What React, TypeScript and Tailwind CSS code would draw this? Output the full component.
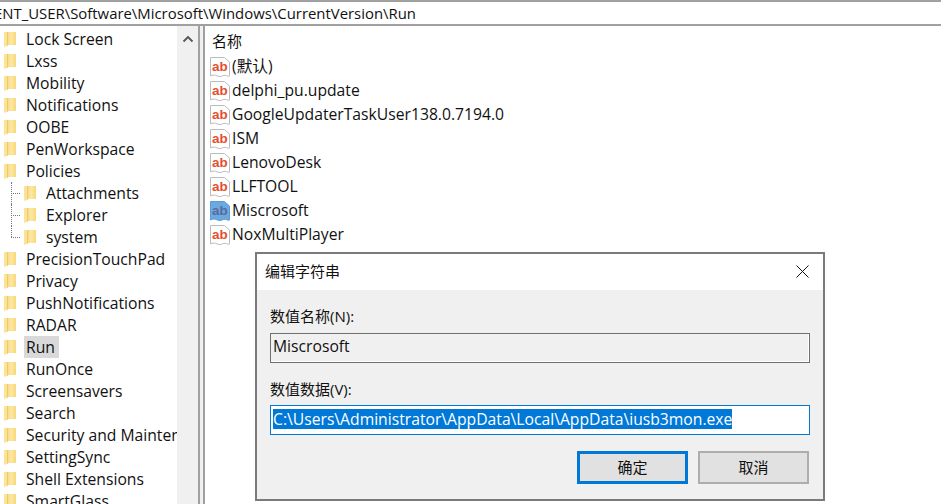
import { FC } from "react";

const font = { fontFamily: '"Open Sans", "Noto Sans CJK SC", sans-serif' };

const Folder: FC = () => (
	<svg width="12" height="16" viewBox="0 0 12 16" className="shrink-0">
		<defs>
			<linearGradient id="fold" x1="0" x2="1" y1="0" y2="0">
				<stop offset="0" stopColor="#f5cf68" />
				<stop offset="0.6" stopColor="#fbe7a6" />
				<stop offset="1" stopColor="#f8d978" />
			</linearGradient>
		</defs>
		<path d="M0 1h12v13H0z" fill="url(#fold)" />
		<path d="M0 1h3l1 1v12.500L0 16z" fill="#fae39a" />
		<path d="M3 1h1v13.500H3z" fill="#f3cb5c" />
	</svg>
);

const AbIcon: FC<{ selected?: boolean }> = ({ selected }) => (
	<svg width="20" height="22" viewBox="0 0 20 22" className="shrink-0">
		<path
			d="M.5 1.500h14l5 4.500v14c-2 1-3-1.500-6-.5s-4 1.500-6 .5-5-1.500-7 0z"
			fill={selected ? "#6ba9e0" : "#fff"}
			stroke={selected ? "#5a9bd8" : "#bcbcbc"}
		/>
		<text x="2" y="15" fontSize="13.500" fontWeight="700" fill={selected ? "#5a6a9a" : "#e4502f"} style={{ fontFamily: '"Liberation Sans", sans-serif' }}>
			ab
		</text>
	</svg>
);

const treeTop = ["Lock Screen", "Lxss", "Mobility", "Notifications", "OOBE", "PenWorkspace", "Policies"];
const treeChildren = ["Attachments", "Explorer", "system"];
const treeBottom = ["PrecisionTouchPad", "Privacy", "PushNotifications", "RADAR", "Run", "RunOnce", "Screensavers", "Search", "Security and Maintenance", "SettingSync", "Shell Extensions", "SmartGlass"];
const values = ["(默认)", "delphi_pu.update", "GoogleUpdaterTaskUser138.0.7194.0", "ISM", "LenovoDesk", "LLFTOOL", "Miscrosoft", "NoxMultiPlayer"];

const TreeRow: FC<{ name: string }> = ({ name }) => (
	<div className="h-[22px] flex items-center pl-[4px] shrink-0 whitespace-nowrap">
		<Folder />
		<span className={`ml-[8px] px-[2px] leading-[22px] ${name === "Run" ? "bg-[#d9d9d9] pr-[4px]" : ""}`}>{name}</span>
	</div>
);

export default function App() {
	return (
		<div className="w-[941px] h-[504px] bg-white text-[15.7px] text-[#111] relative overflow-hidden flex flex-col" style={font}>
			{/* Address bar */}
			<div className="h-[26px] shrink-0 border-t-2 border-b-2 border-[#a0a0a0] flex items-center whitespace-nowrap overflow-hidden text-[14.9px]">
				<span className="-ml-[6px]">ENT_USER\Software\Microsoft\Windows\CurrentVersion\Run</span>
			</div>

			<div className="flex flex-1 min-h-0">
				{/* Tree */}
				<div className="w-[177px] shrink-0 overflow-hidden pt-[2px]">
					{treeTop.map((n) => <TreeRow key={n} name={n} />)}
					{treeChildren.map((n, i) => (
						<div key={n} className="h-[22px] flex items-center pl-[11px] relative whitespace-nowrap">
							<div className={`absolute left-[11px] top-0 border-l border-dotted border-[#777] ${i === 2 ? "h-[11px]" : "h-[22px]"}`} />
							<div className="w-[9px] mr-[4px] border-t border-dotted border-[#777]" />
							<Folder />
							<span className="ml-[8px] px-[2px] pt-[1px]">{n}</span>
						</div>
					))}
					{treeBottom.map((n) => <TreeRow key={n} name={n} />)}
				</div>

				{/* Scrollbar */}
				<div className="w-[21px] shrink-0 bg-[#f0f0f0] flex justify-center pt-[9px]">
					<svg width="12" height="8" viewBox="0 0 12 8">
						<path d="M1.500 6.500 6 2l4.500 4.500" fill="none" stroke="#555" strokeWidth="1.800" />
					</svg>
				</div>

				{/* Splitter */}
				<div className="w-[7px] shrink-0 border-x-2 border-[#a0a0a0] bg-[#f0f0f0]" />

				{/* Values */}
				<div className="flex-1 pl-[5px] pt-[3px] whitespace-nowrap">
					<div className="h-[26px] flex items-center pl-[2px] pb-[1px] text-[15px]">名称</div>
					{values.map((v) => (
						<div key={v} className="h-[24px] flex items-center gap-[2px]">
							<AbIcon selected={v === "Miscrosoft"} />
							<span>{v}</span>
						</div>
					))}
				</div>
			</div>

			{/* Edit string dialog */}
			<div className="absolute left-[255px] top-[252px] w-[570px] h-[249px] border-2 border-[#7a7a7a] bg-[#f0f0f0] flex flex-col">
				<div className="h-[36px] shrink-0 bg-white flex items-center justify-between pl-[8px] pr-[14px] pb-[2px]">
					<span className="text-[15px]">编辑字符串</span>
					<svg width="13" height="13" viewBox="0 0 13 13">
						<path d="M.5.500l12 12M12.500.500l-12 12" stroke="#111" strokeWidth="1" />
					</svg>
				</div>
				<div className="flex-1 px-[13px] pt-[16px] flex flex-col">
					<div className="text-[15px] leading-[20px]">数值名称(N):</div>
					<div className="mt-[7px] h-[30px] border border-[#707070] shadow-[inset_-1px_-1px_0_#fff] bg-[#f0f0f0] flex items-center pl-[2px] pb-[3px]">Miscrosoft</div>
					<div className="mt-[16px] text-[15px] leading-[20px]">数值数据(V):</div>
					<div className="mt-[6px] h-[30px] border border-[#0078d7] bg-white flex items-center pl-[2px] pb-[3px]">
						<span className="bg-[#0078d7] text-white leading-[20px]">C:\Users\Administrator\AppData\Local\AppData\iusb3mon.exe</span>
					</div>
					<div className="mt-[16px] mr-[1px] flex justify-end gap-[10px]">
						<button className="w-[111px] h-[33px] border-[3px] border-[#0078d7] bg-[#e1e1e1] text-[15px]">确定</button>
						<button className="w-[111px] h-[33px] border-2 border-[#adadad] bg-[#e1e1e1] text-[15px]">取消</button>
					</div>
				</div>
			</div>
		</div>
	);
}
